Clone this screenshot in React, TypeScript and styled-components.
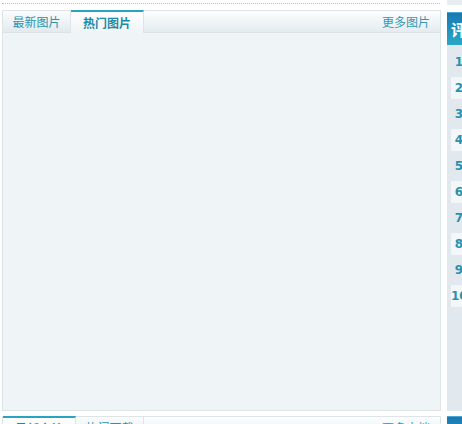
import React from "react";
import styled, { createGlobalStyle } from "styled-components";

const Global = createGlobalStyle`
  html, body { margin: 0; padding: 0; background: #fff; overflow: hidden; }
  body { font-family: "Noto Sans CJK SC", "Liberation Sans", sans-serif; font-size: 12px; }
`;

const Page = styled.div`
  display: flex;
  align-items: flex-start;
  gap: 5px;
  width: 660px;
  height: 424px;
  overflow: hidden;
`;

const Main = styled.div`
  width: 442px;
  flex-shrink: 0;
  display: flex;
  flex-direction: column;
`;

const Dotted = styled.div`
  height: 3px;
  flex-shrink: 0;
  border-bottom: 1px dotted #b8c4ca;
  margin: 0 2px 6px 2px;
`;

const Panel = styled.div<{ $h: number }>`
  margin-left: 2px;
  width: 439px;
  height: ${(p) => p.$h}px;
  flex-shrink: 0;
  box-sizing: border-box;
  border: 1px solid #dde5e9;
  border-top: none;
  background: #eff4f6;
  display: flex;
  flex-direction: column;
  margin-bottom: 5px;
`;

const TabBar = styled.div`
  height: 23px;
  flex-shrink: 0;
  display: flex;
  align-items: stretch;
  border-top: 1px solid #dde5e9;
  box-sizing: border-box;
  background: linear-gradient(#fdfefe, #e3ebef);
`;

const Tab = styled.div<{ $active?: boolean }>`
  width: ${(p) => (p.$active ? 73 : 68)}px;
  box-sizing: border-box;
  display: flex;
  align-items: center;
  justify-content: center;
  border-right: 1px solid #dce5e9;
  color: ${(p) => (p.$active ? "#1c8ba6" : "#2d92ae")};
  font-weight: ${(p) => (p.$active ? 700 : 400)};
  background: ${(p) =>
    p.$active ? "linear-gradient(#ffffff, #eff4f6)" : "linear-gradient(#fbfdfd, #e2eaee)"};
  border-top: ${(p) => (p.$active ? "2px solid #2aa3bf" : "none")};
  margin-top: ${(p) => (p.$active ? "-1px" : "0")};
  padding-bottom: 1px;
  border-bottom: ${(p) => (p.$active ? "none" : "1px solid #d9e3e7")};
`;

const TabFill = styled.div`
  flex: 1;
  display: flex;
  align-items: center;
  justify-content: flex-end;
  padding-right: 10px;
  color: #3598b3;
  border-bottom: 1px solid #d9e3e7;
`;

const Side = styled.div`
  width: 200px;
  flex-shrink: 0;
  display: flex;
  flex-direction: column;
`;

const SideTop = styled.div`
  height: 5px;
  flex-shrink: 0;
  background: #e6ecef;
  margin-bottom: 7px;
`;

const SideHead = styled.div`
  height: 33px;
  flex-shrink: 0;
  box-sizing: border-box;
  background: linear-gradient(#1a78b2, #2aa8c8);
  border-top: 1px solid #4aa6d2;
  color: #fff;
  font-weight: 700;
  font-size: 16px;
  display: flex;
  align-items: center;
  padding-left: 4px;
`;

const List = styled.div`
  height: 366px;
  flex-shrink: 0;
  background: #e1e9ee;
  padding: 6px 0 0 4px;
  box-sizing: border-box;
  margin-bottom: 5px;
  display: flex;
  flex-direction: column;
  gap: 4px;
`;

const Row = styled.div<{ $alt: boolean }>`
  height: 22px;
  flex-shrink: 0;
  display: flex;
  align-items: center;
  background: ${(p) => (p.$alt ? "#f4f7f9" : "transparent")};
`;

const Num = styled.span`
  width: 16px;
  text-align: center;
  color: #2891ab;
  font-family: "DejaVu Sans", "Liberation Sans", sans-serif;
  font-weight: 700;
  font-size: 12px;
  white-space: nowrap;
`;

const nums = [1, 2, 3, 4, 5, 6, 7, 8, 9, 10];

export default function App() {
  return (
    <>
      <Global />
      <Page>
        <Main>
          <Dotted />
          <Panel $h={401}>
            <TabBar>
              <Tab>最新图片</Tab>
              <Tab $active>热门图片</Tab>
              <TabFill>更多图片</TabFill>
            </TabBar>
          </Panel>
          <Panel $h={200}>
            <TabBar>
              <Tab $active>最新文档</Tab>
              <Tab>热门下载</Tab>
              <TabFill>更多文档</TabFill>
            </TabBar>
          </Panel>
        </Main>
        <Side>
          <SideTop />
          <SideHead>评论排行</SideHead>
          <List>
            {nums.map((n) => (
              <Row key={n} $alt={n % 2 === 0}>
                <Num>{n}</Num>
              </Row>
            ))}
          </List>
          <SideHead>热门标签</SideHead>
        </Side>
      </Page>
    </>
  );
}
